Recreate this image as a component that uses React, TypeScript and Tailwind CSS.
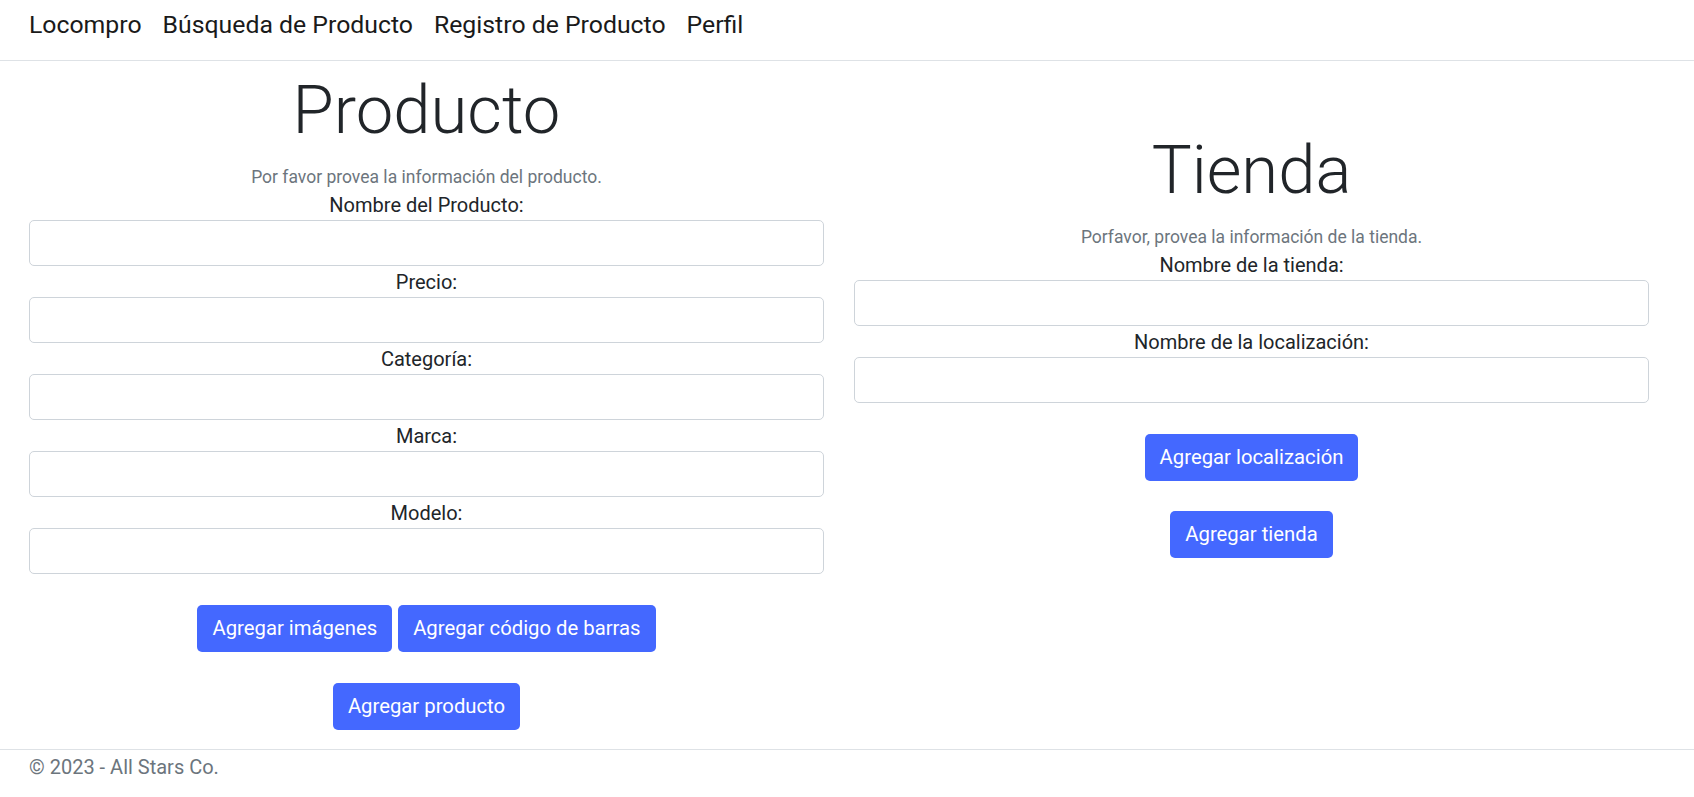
import React from "react";

function Field({ label }: { label: string }) {
  return (
    <div className="flex flex-col mb-[2px]">
      <label className="text-center text-[20px] leading-[29px] text-[#212529]">{label}</label>
      <input className="h-[46px] w-full border border-[#ced4da] rounded-[5px] bg-white px-[14px] text-[19.2px] outline-none" />
    </div>
  );
}

function Btn({ children }: { children: React.ReactNode }) {
  return (
    <button className="h-[47px] px-[15px] bg-[#4468ff] text-white rounded-[5px] text-[20.3px] leading-[29px]">
      {children}
    </button>
  );
}

export default function App() {
  return (
    <div className="min-h-[797px] flex flex-col bg-white font-['Roboto','Noto_Sans',sans-serif] text-[#212529]">
      <nav className="h-[61px] border-b border-[#dee2e6] flex items-start gap-[21px] px-[29px] pt-[7px] text-[24.8px] leading-[36px] text-[#1a1a1a]">
        <span>Locompro</span>
        <span>Búsqueda de Producto</span>
        <span>Registro de Producto</span>
        <span>Perfil</span>
      </nav>
      <main className="flex-1 px-[29px] grid grid-cols-[795px_795px] gap-[30px] items-start">
        <section className="pt-[9px] flex flex-col">
          <h1 className="text-center text-[67px] leading-[80px] font-light mb-[15px]">Producto</h1>
          <p className="text-center text-[17.5px] leading-[25px] text-[#6c757d] mb-[1px]">
            Por favor provea la información del producto.
          </p>
          <Field label="Nombre del Producto:" />
          <Field label="Precio:" />
          <Field label="Categoría:" />
          <Field label="Marca:" />
          <Field label="Modelo:" />
          <div className="flex justify-center gap-[6px] mt-[29px]">
            <Btn>Agregar imágenes</Btn>
            <Btn>Agregar código de barras</Btn>
          </div>
          <div className="flex justify-center mt-[31px]">
            <Btn>Agregar producto</Btn>
          </div>
        </section>
        <section className="pt-[69px] flex flex-col">
          <h1 className="text-center text-[67px] leading-[80px] font-light mb-[15px]">Tienda</h1>
          <p className="text-center text-[17.5px] leading-[25px] text-[#6c757d] mb-[1px]">
            Porfavor, provea la información de la tienda.
          </p>
          <Field label="Nombre de la tienda:" />
          <Field label="Nombre de la localización:" />
          <div className="flex justify-center mt-[29px]">
            <Btn>Agregar localización</Btn>
          </div>
          <div className="flex justify-center mt-[30px]">
            <Btn>Agregar tienda</Btn>
          </div>
        </section>
      </main>
      <footer className="h-[48px] border-t border-[#dee2e6] px-[29px] pt-[3px] text-[20px] leading-[29px] text-[#6c757d]">
        © 2023 - All Stars Co.
      </footer>
    </div>
  );
}
